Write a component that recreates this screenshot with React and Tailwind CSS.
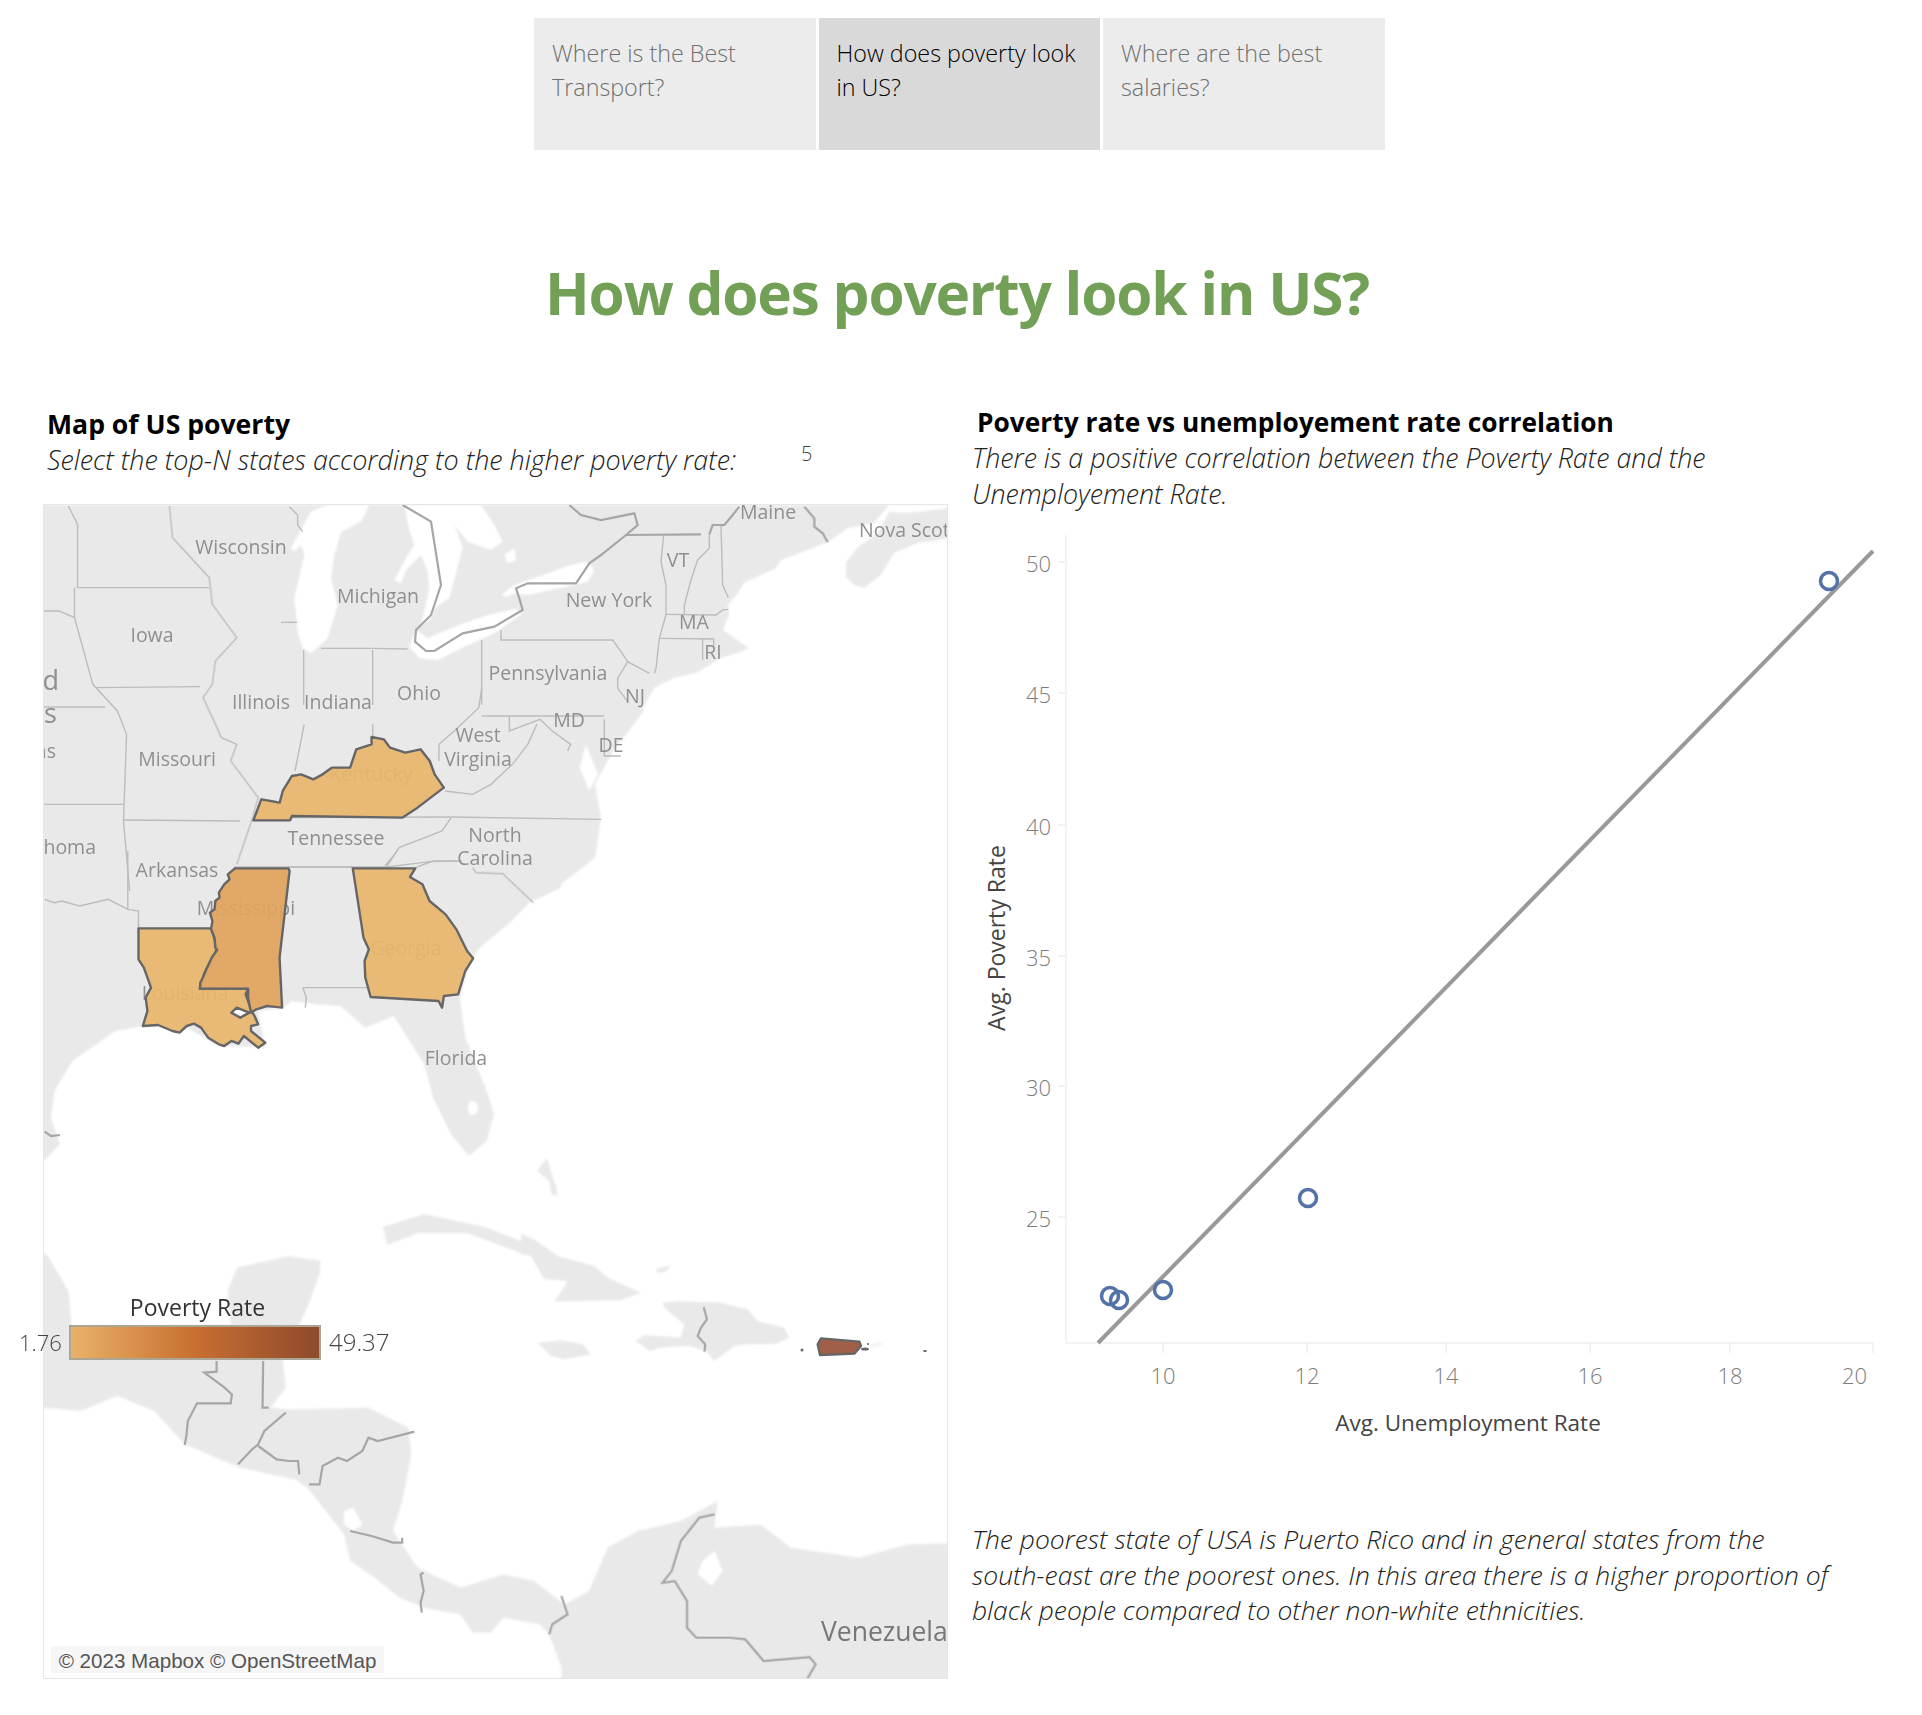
import React from 'react';

const tabs = [
    { label: 'Where is the Best Transport?', active: false },
    { label: 'How does poverty look in US?', active: true },
    { label: 'Where are the best salaries?', active: false },
];

// Map shapes are written in the coordinates of reference crops, each transform below maps one back to the page
const TOP = 'translate(0 390) scale(0.6125 0.33333)';
const GULF = 'translate(0 850) scale(0.35714 0.33333)';
const SOUTH = 'translate(0 1240) scale(0.6125 0.33333)';
const ISLES = 'translate(520 1180) scale(0.33333)';
const LAKES = 'translate(280 504) scale(0.33333)';
const EAST = 'translate(640 504) scale(0.33333)';

const land = {
    north: 'M40,504 L888,504 L873,522 L847,527 L827,541 L807,549 L780,559 L775,567 L760,574 L743,582 L737,592 L727,604 L728,614 L722,629 L733,637 L748,647 L737,652 L720,657 L697,671 L673,677 L653,687 L642,707 L643,710 L612,750 L594,783 L600,817 L594,857 L551,890 L40,890 Z',
    nova: 'M845,561 L857,546 L877,532 L888,511 L907,512 L950,507 L950,537 L917,542 L893,552 L880,574 L863,587 L853,584 L845,576 Z',
    gulf: 'M0,0 L1568,0 L1568,110 L1480,155 L1420,220 L1340,290 L1310,340 L1285,440 L1300,560 L1360,720 L1380,790 L1360,870 L1310,915 L1260,850 L1210,740 L1185,640 L1100,495 L1020,530 L950,465 L880,460 L815,450 L790,470 L720,480 L740,590 L610,585 L520,530 L400,525 L320,540 L200,630 L150,720 L140,800 L165,880 L120,930 L0,930 Z',
    south: 'M0,20 L75,40 L110,150 L115,255 L375,255 L370,150 L385,80 L470,45 L522,60 L520,100 L500,200 L460,360 L465,440 L440,500 L470,505 L600,500 L665,560 L670,640 L655,780 L640,870 L680,980 L750,1040 L820,1000 L870,1020 L920,1090 L960,1050 L990,920 L1040,870 L1110,840 L1170,780 L1165,860 L1240,850 L1290,920 L1400,950 L1480,910 L1568,905 L1568,1330 L915,1330 L915,1280 L895,1180 L880,1150 L820,1130 L800,1175 L770,1175 L750,1120 L690,1100 L650,1070 L610,1010 L570,960 L560,880 L500,740 L480,715 L390,680 L300,610 L250,510 L190,465 L130,510 L70,500 L0,500 Z',
};

const lakes = {
    great: [
        'M90,20 L140,0 L265,0 L240,50 L180,80 L160,150 L150,220 L170,300 L140,400 L90,445 L65,430 L50,380 L40,280 L70,150 L60,120 L40,140 L30,130 Z',
        'M370,0 L600,0 L640,60 L665,110 L630,135 L560,110 L520,60 L545,130 L505,280 L465,305 L445,345 L420,360 L445,250 L440,200 L420,150 L375,195 L360,235 L340,225 L375,160 L400,120 L385,75 Z',
        'M670,150 L700,130 L705,165 L680,175 Z',
        'M385,425 L405,375 L440,400 L520,365 L620,330 L700,312 L725,325 L640,385 L550,425 L470,465 L415,460 Z',
        'M660,270 L700,240 L800,205 L870,180 L915,170 L940,195 L920,230 L880,240 L740,270 L700,265 L680,275 Z',
    ],
    chesapeake: 'M955,1060 L975,1150 L960,1200 L945,1130 Z',
    south: [
        'M560,810 L575,800 L590,850 L575,870 L560,850 Z',
        'M1145,960 L1165,930 L1178,990 L1160,1035 L1138,1000 Z',
    ],
};

const stateLines = {
    top: [
        'M110,345 L125,400 L125,590 L340,590',
        'M275,345 L280,440 L340,560 L345,640 L385,740 L350,810 L345,880 L330,920 L360,1040 L385,1060 L375,1110 L420,1220 L410,1285 L385,1420',
        'M120,590 L120,680 L150,880 L190,960 L205,1030 L200,1290 L210,1500',
        'M155,890 L325,887',
        'M70,660 L95,660 L120,680',
        'M200,1287 L390,1290',
        'M70,948 L170,948',
        'M70,1240 L200,1240',
        'M495,1000 L480,1140',
        'M607,1000 L607,1035',
        'M785,890 L780,950 L740,1020 L715,1060 L715,1110',
        'M835,1120 L800,1180 L770,1210 L725,1200',
        'M785,975 L985,975',
        'M830,975 L830,1020 L880,985 L900,1020 L930,1060 L925,1080',
        'M875,1000 L860,1060 L835,1120',
        'M985,985 L985,1095 L1012,1095',
        'M475,1280 L735,1278 L980,1285',
        'M735,1280 L720,1320 L650,1370 L630,1425',
        'M380,1428 L630,1428 L700,1412 L745,1410',
    ],
    gulf: [
        'M122,145 L150,155 L170,150 L220,165 L300,145 L355,175 L385,180 L385,230',
        'M355,0 L355,175',
        'M845,410 L1025,410',
        'M845,410 L855,440 L852,470',
        'M805,48 L985,48',
        'M1075,45 L1110,0',
        'M1160,50 L1210,30 L1290,30',
        'M1320,50 L1330,65 L1405,68 L1490,155',
    ],
    great: [
        'M25,5 L50,30 L50,60 L65,80',
        'M0,352 L48,352',
        'M120,430 L275,430 L380,432',
        'M68,435 L68,600',
        'M275,435 L275,600',
        'M602,405 L602,600',
        'M660,375 L660,405 L995,405 L1020,440 L1040,470 L1105,505',
        'M1040,470 L1010,520 L1010,550 L1040,590',
        'M1148,90 L1140,170 L1155,240 L1155,330 L1135,400 L1125,490 L1120,505',
    ],
    east: [
        'M205,88 L205,130 L170,165 L150,225 L130,300 L130,330',
        'M240,60 L245,240 L262,278',
        'M75,328 L225,330 L245,315 L262,313',
        'M57,400 L218,402 L218,425',
        'M185,402 L185,465',
    ],
};

const borderLines = {
    great: [
        'M365,0 L450,50 L480,240 L450,330 L405,375 L402,410 L435,438 L460,438 L545,385 L640,365 L725,315 L715,280 L705,250 L740,235 L885,235 L925,175 L960,150 L1035,90 L1260,88',
        'M865,0 L900,30 L960,45 L1060,25 L1070,60 L1035,90',
    ],
    east: [
        'M205,88 L215,60 L250,60 L275,30 L295,5',
        'M490,5 L520,40 L520,65 L545,85 L560,112',
    ],
    gulf: ['M122,842 L140,855 L165,852'],
    south: [
        'M352,360 L352,392 L332,395 L365,440 L377,460 L375,487 L320,487 L305,540 L303,580 L300,612',
        'M428,360 L427,500 L437,500',
        'M465,515 L430,570 L420,610 L410,625 L387,670',
        'M420,615 L450,655 L470,660 L485,660 L487,700',
        'M675,572 L615,600 L600,590 L590,630 L565,660 L550,650 L525,675 L520,730 L503,730',
        'M570,870 L605,885 L640,905 L655,905 L655,890',
        'M690,995 L685,1000 L690,1050 L685,1085 L687,1115',
        'M915,1065 L925,1120 L900,1150 L895,1180',
        'M1165,820 L1140,830 L1110,900 L1095,990 L1080,1025 L1100,1020 L1120,1080 L1120,1160 L1135,1190 L1190,1190 L1215,1195 L1245,1260 L1320,1248 L1330,1270 L1315,1318',
    ],
    isles: ['M548,378 L558,415 L540,440 L530,465 L553,490 L550,512'],
};

const mapLabels = [
    ['Wisconsin', 240, 546], ['Michigan', 377, 595], ['New York', 608, 599], ['Iowa', 151, 634],
    ['Illinois', 260, 701], ['Indiana', 337, 701], ['Ohio', 418, 692], ['Pennsylvania', 547, 672],
    ['VT', 677, 559], ['MA', 693, 621], ['RI', 712, 651], ['NJ', 634, 695], ['MD', 568, 719], ['DE', 610, 744],
    ['West', 477, 734], ['Virginia', 477, 758], ['Missouri', 176, 758], ['Kentucky', 370, 773],
    ['Tennessee', 335, 837], ['North', 494, 834], ['Carolina', 494, 857], ['Arkansas', 176, 869],
    ['Maine', 767, 511], ['Mississippi', 245, 907], ['Louisiana', 184, 992],
    ['Georgia', 405, 947], ['Florida', 455, 1057],
];

const LineSet = ({ lines, transform }) => lines.map(d => (
    <path key={d} transform={transform} d={d} vectorEffect="non-scaling-stroke" />
));

const MapDrawing = () => (
    <svg viewBox="43 504 905 1175" width="905" height="1175" className="block">
        <defs>
            <filter id="soft"><feGaussianBlur stdDeviation="0.9" /></filter>
            <filter id="softLine" x="-5%" y="-5%" width="110%" height="110%"><feGaussianBlur stdDeviation="0.35" /></filter>
        </defs>

        {/* land and water */}
        <g fill="#e9e9e9" filter="url(#soft)">
            <path d={land.north} />
            <path d={land.nova} />
            <path transform={GULF} d={land.gulf} />
            <path transform={SOUTH} d={land.south} />
            <path d="M536,1170 L546,1157 L557,1193 L548,1180 Z" />
            <path transform={ISLES} d="M0,160 L40,175 L110,225 L220,255 L260,290 L360,335 L300,358 L100,362 L140,300 L70,295 L30,225 L0,220 Z" />
            <path d="M382,1226 L423,1213 L484,1226 L520,1240 L520,1252 L466,1232 L417,1232 L386,1244 Z" />
            <path transform={ISLES} d="M425,365 L470,360 L600,365 L680,385 L710,420 L790,440 L805,470 L760,490 L680,490 L640,495 L580,540 L555,510 L500,495 L420,500 L385,510 L345,480 L370,462 L480,470 L490,430 L430,380 Z" />
            <path transform={ISLES} d="M50,485 L120,478 L185,490 L210,520 L130,535 L90,525 Z" />
            <path transform={ISLES} d="M405,265 L440,255 L450,250 L435,272 L410,275 Z" />
            <path transform={ISLES} d="M85,0 L105,10 L108,45 L92,40 Z" />
            <path transform={ISLES} d="M1040,490 L1090,480 L1080,495 L1050,500 Z" fill="#f5f5f5" />
        </g>
        <g fill="#ffffff" filter="url(#soft)">
            {lakes.great.map(d => <path key={d} transform={LAKES} d={d} />)}
            <path transform={TOP} d={lakes.chesapeake} />
            {lakes.south.map(d => <path key={d} transform={SOUTH} d={d} />)}
            <ellipse cx="472" cy="1107" rx="5" ry="7" />
        </g>

        {/* borders */}
        <g fill="none" stroke="#bcbcbc" strokeWidth="1.4" filter="url(#softLine)">
            <LineSet lines={stateLines.top} transform={TOP} />
            <LineSet lines={stateLines.gulf} transform={GULF} />
            <LineSet lines={stateLines.great} transform={LAKES} />
            <LineSet lines={stateLines.east} transform={EAST} />
        </g>
        <g fill="none" stroke="#a6a6a6" strokeWidth="2.2" filter="url(#softLine)">
            <LineSet lines={borderLines.great} transform={LAKES} />
            <LineSet lines={borderLines.east} transform={EAST} />
            <LineSet lines={borderLines.gulf} transform={GULF} />
            <LineSet lines={borderLines.south} transform={SOUTH} />
            <LineSet lines={borderLines.isles} transform={ISLES} />
        </g>

        {/* place names */}
        <g fill="#8f8f8f" textAnchor="middle" className="font-['Open_Sans'] text-[19.5px]">
            {mapLabels.map(([name, x, y]) => (
                <text key={name} x={x} y={y + 7}>{name}</text>
            ))}
            <text x="95" y="853" textAnchor="end">Oklahoma</text>
            <text x="858" y="536" textAnchor="start">Nova Scotia</text>
            <text x="58" y="689" textAnchor="end" className="text-[27px]">United</text>
            <text x="56" y="722" textAnchor="end" className="text-[27px]">States</text>
            <text x="55" y="757" textAnchor="end">Kansas</text>
            <text x="820" y="1640" textAnchor="start" fill="#777777" className="text-[26.5px]">Venezuela</text>
        </g>

        {/* selected states */}
        <g stroke="#666666" strokeWidth="2.4" strokeLinejoin="round">
            <path transform={GULF} vectorEffect="non-scaling-stroke" fillOpacity="0.93" fill="#e8b56d" d="M385,232 L590,232 L605,295 L570,365 L557,413 L692,413 L685,430 L702,480 L710,495 L720,520 L700,525 L700,540 L740,575 L720,590 L680,555 L665,578 L645,570 L625,585 L610,580 L580,560 L560,530 L540,518 L520,525 L500,545 L480,540 L440,522 L397,525 L410,480 L405,440 L420,410 L400,350 L385,325 Z" />
            <path transform={GULF} vectorEffect="non-scaling-stroke" fillOpacity="0.93" fill="#e1a35d" d="M655,52 L805,52 L808,60 L780,320 L787,470 L745,465 L715,475 L700,485 L692,440 L692,413 L557,413 L558,395 L565,380 L575,355 L590,320 L605,297 L600,290 L598,260 L588,235 L592,210 L585,185 L598,175 L600,150 L612,140 L610,125 L625,100 L640,85 L635,70 Z" />
            <path transform={GULF} vectorEffect="non-scaling-stroke" fillOpacity="0.93" fill="#e8b56d" d="M985,52 L1160,52 L1145,78 L1180,100 L1200,150 L1245,190 L1275,235 L1305,300 L1322,322 L1300,360 L1280,430 L1240,435 L1235,470 L1225,450 L1035,438 L1020,380 L1018,330 L1030,295 L1015,260 Z" />
            <path transform={GULF} vectorEffect="non-scaling-stroke" fill="#ffffff" d="M645,485 L660,470 L695,485 L670,500 Z" />
            <path transform={TOP} vectorEffect="non-scaling-stroke" fillOpacity="0.93" fill="#e8b56d" d="M605,1038 L625,1045 L635,1070 L660,1085 L685,1075 L700,1110 L708,1150 L723,1190 L680,1250 L655,1280 L475,1275 L472,1288 L412,1288 L425,1225 L455,1235 L460,1200 L475,1155 L490,1150 L510,1165 L525,1150 L540,1130 L570,1130 L580,1075 L605,1060 Z" />
            <path transform={ISLES} vectorEffect="non-scaling-stroke" fill="#a15f48" d="M890,490 L900,472 L1015,482 L1020,495 L1000,518 L897,522 Z" />
        </g>
        <g fill="#666666">
            <circle cx="801" cy="1349" r="1.5" />
            <ellipse cx="864" cy="1348" rx="4" ry="1.6" />
            <circle cx="867" cy="1343" r="1" />
            <ellipse cx="924" cy="1350" rx="2" ry="1" />
        </g>
    </svg>
);

const Legend = () => (
    <div className="absolute left-[-25px] top-[785px] font-['Open_Sans'] text-[#444444]">
        <div className="pl-[51px] w-[306px] text-center text-[23px] leading-[34px] text-[#333333]">Poverty Rate</div>
        <div className="flex items-center">
            <span className="w-[43px] text-left text-[22px] font-light">1.76</span>
            <div className="ml-[7px] h-[35px] w-[252px] border-2 border-[#aaa597] bg-gradient-to-r from-[#e8b268] via-[#c86f30] to-[#8f4a2c]"></div>
            <span className="ml-[8px] text-[24px] font-light">49.37</span>
        </div>
    </div>
);

const xTicks = [[10, 1163], [12, 1307], [14, 1446], [16, 1590], [18, 1730], [20, 1873]];
const yTicks = [[50, 562], [45, 693], [40, 825], [35, 956], [30, 1086], [25, 1217]];
const points = [[1829, 581], [1308, 1198], [1163, 1290], [1110, 1296], [1119, 1300]];

const ScatterChart = () => (
    <svg viewBox="960 520 962 920" width="962" height="920" className="block font-['Open_Sans']">
        <g stroke="#efefef" strokeWidth="1.5" fill="none">
            <path d="M1066,535 L1066,1343 L1873,1343" />
            {xTicks.map(([v, x]) => <path key={v} d={`M${x},1343 L${x},1353`} />)}
            {yTicks.map(([v, y]) => <path key={v} d={`M1058,${y} L1066,${y}`} />)}
        </g>
        <g fill="#7c7c7c" className="text-[22px] font-light">
            {xTicks.map(([v, x]) => (
                <text key={v} x={v === 20 ? 1867 : x} y="1384" textAnchor={v === 20 ? 'end' : 'middle'}>{v}</text>
            ))}
            {yTicks.map(([v, y]) => (
                <text key={v} x="1051" y={y + 10} textAnchor="end">{v}</text>
            ))}
        </g>
        <line x1="1098" y1="1343" x2="1873" y2="551" stroke="#999999" strokeWidth="4" />
        <g fill="none" stroke="#5272a8" strokeWidth="3.5">
            {points.map(([x, y]) => <circle key={x} cx={x} cy={y} r="8.5" />)}
        </g>
        <text x="1468" y="1431" textAnchor="middle" fill="#444444" className="text-[22.5px]">Avg. Unemployment Rate</text>
        <text x="0" y="0" textAnchor="middle" fill="#444444" transform="translate(1005 938) rotate(-90)" className="text-[23px]">Avg. Poverty Rate</text>
    </svg>
);

export default function App() {
    return (
        <div className="w-[1922px] h-[1715px] bg-white overflow-hidden font-['Open_Sans'] text-black">
            {/* Tabs */}
            <nav className="flex gap-[3px] pl-[534px] pt-[18px]">
                {tabs.map(tab => (
                    <div
                        key={tab.label}
                        className={`w-[281.5px] h-[132px] pl-[18px] pr-[10px] pt-[18px] text-[23.3px] leading-[34px] font-light ${tab.active ? 'bg-[#d9d9d9] text-black' : 'bg-[#ececec] text-[#707070]'}`}
                    >
                        {tab.label}
                    </div>
                ))}
            </nav>

            {/* Title */}
            <h1 className="h-[254px] pt-[101px] pr-[8px] text-center text-[58.5px] leading-[82px] font-bold tracking-[-1.2px] text-[#72a056]">
                How does poverty look in US?
            </h1>

            <div className="flex">
                {/* Map column */}
                <section className="w-[960px] pl-[43px] pt-[2px]">
                    <div className="h-[98px] pl-[4px]">
                        <h2 className="text-[26.6px] leading-[36px] font-bold">Map of US poverty</h2>
                        <div className="flex">
                            <p className="w-[754px] text-[26.9px] leading-[36px] italic font-light text-[#222222]">Select the top-N states according to the higher poverty rate:</p>
                            <span className="-mt-[6px] text-[20px] leading-[36px] font-light text-[#444444]">5</span>
                        </div>
                    </div>
                    <div className="relative w-[905px] h-[1175px] border border-[#e6e6e6]">
                        <div className="absolute inset-0 overflow-hidden"><MapDrawing /></div>
                        <Legend />
                        <div className="absolute left-[7px] bottom-[5px] h-[27px] w-[333px] bg-[#f6f6f6] text-center font-['Liberation_Sans'] text-[20.6px] leading-[30px] text-[#555555]">
                            © 2023 Mapbox © OpenStreetMap
                        </div>
                    </div>
                </section>

                {/* Correlation column */}
                <section className="w-[962px]">
                    <div className="pl-[12px] h-[116px]">
                        <h2 className="pl-[5px] text-[26.3px] leading-[36px] font-bold">Poverty rate vs unemployement rate correlation</h2>
                        <p className="text-[26.8px] leading-[36px] italic font-light text-[#222222]">There is a positive correlation between the Poverty Rate and the<br />Unemployement Rate.</p>
                    </div>
                    <ScatterChart />
                    <p className="pl-[12px] mt-[82px] text-[26.45px] leading-[35.5px] italic font-light text-[#222222]">
                        The poorest state of USA is Puerto Rico and in general states from the<br />
                        south-east are the poorest ones. In this area there is a higher proportion of<br />
                        black people compared to other non-white ethnicities.
                    </p>
                </section>
            </div>
        </div>
    );
}
